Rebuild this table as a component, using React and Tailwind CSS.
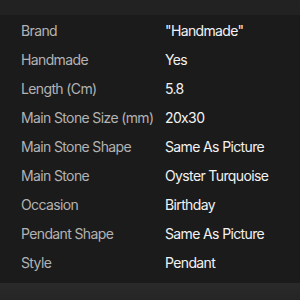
import React from "react";

const specs = [
	["Brand", "\"Handmade\""],
	["Handmade", "Yes"],
	["Length (Cm)", "5.8"],
	["Main Stone Size (mm)", "20x30"],
	["Main Stone Shape", "Same As Picture"],
	["Main Stone", "Oyster Turquoise"],
	["Occasion", "Birthday"],
	["Pendant Shape", "Same As Picture"],
	["Style", "Pendant"],
];

export default function App() {
	return (
		<div className="w-[300px] h-[300px] overflow-hidden bg-[#1b1b1b] flex flex-col font-['Inter',sans-serif] [font-feature-settings:'calt'_0]">
			{/* faded top edge */}
			<div className="h-[15px] shrink-0 bg-[#222222]" />

			<div className="flex flex-col pt-[1px] pl-[21px]">
				{specs.map(([label, value]) => (
					<div key={label} className="h-[29px] flex items-center text-[14px] tracking-[-0.045em] whitespace-nowrap">
						<span className="w-[144px] shrink-0 text-[#b3b3b3]">{label}</span>
						<span className="text-[#f2f2f2]">{value}</span>
					</div>
				))}
			</div>

			<div className="mt-auto h-[17px] shrink-0 bg-gradient-to-b from-[#2a2a2a] to-[#252525]" />
		</div>
	);
}
